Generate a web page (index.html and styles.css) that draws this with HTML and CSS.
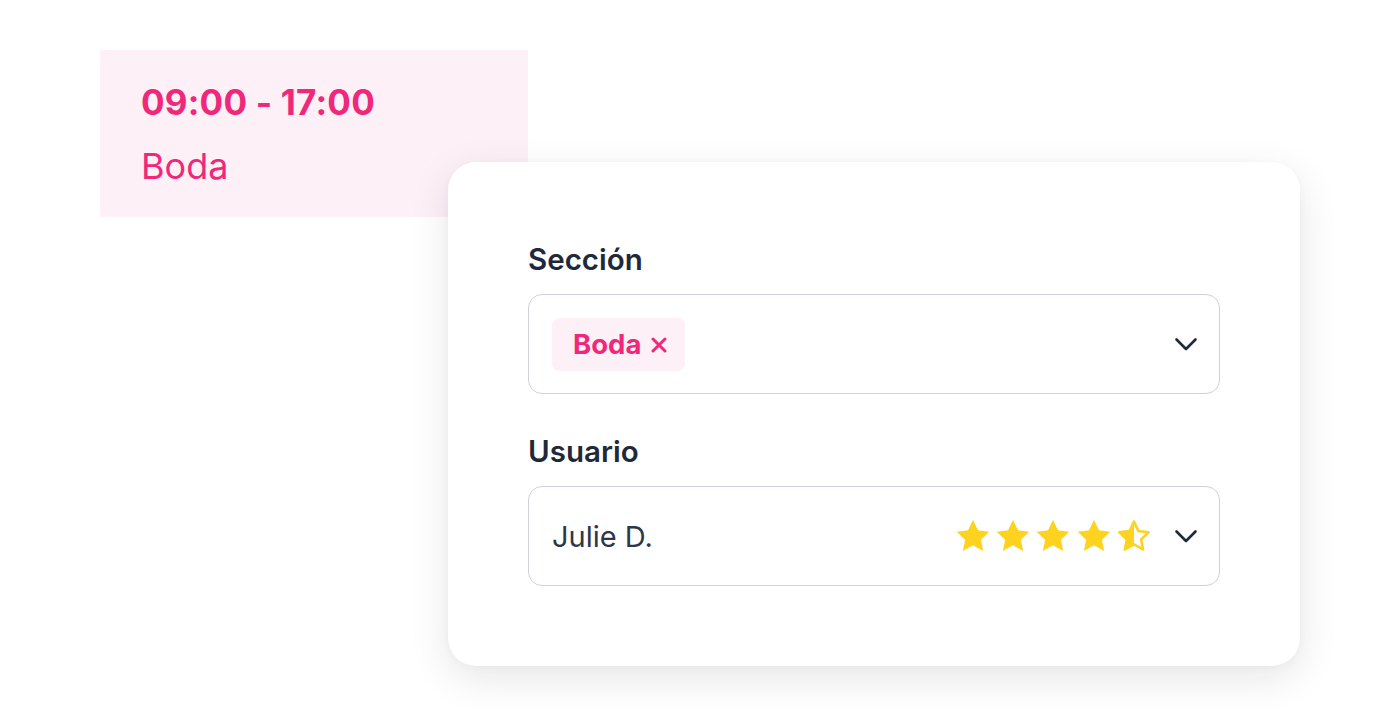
FILE: index.html
```html
<!DOCTYPE html>
<html lang="es">
<head>
<meta charset="utf-8">
<link rel="stylesheet" href="styles.css">
</head>
<body>
<div class="stage">
  <div class="event">
    <div class="event-time">09:00 - 17:00</div>
    <div class="event-name">Boda</div>
  </div>
  <div class="panel">
    <div class="field">
      <div class="label">Sección</div>
      <div class="select">
        <span class="tag"><span class="tag-text">Boda</span><svg class="tag-x" viewBox="0 0 16 16" width="16" height="16"><path d="M2 2l12 12M14 2L2 14" fill="none" stroke="#f0287a" stroke-width="3" stroke-linecap="round"/></svg></span>
        <span class="spacer"></span>
        <svg class="chev" viewBox="0 0 24 24" width="24" height="24"><path d="M2.5 7.5l9.5 9.5 9.5-9.5" fill="none" stroke="#1e293b" stroke-width="2.6" stroke-linecap="round" stroke-linejoin="round"/></svg>
      </div>
    </div>
    <div class="field">
      <div class="label">Usuario</div>
      <div class="select">
        <span class="value">Julie D.</span>
        <span class="spacer"></span>
        <span class="stars">
          <svg viewBox="0 0 24 24" width="38" height="38"><path class="star" d="M12 1.8l3.1 6.6 7.2.9-5.3 5 1.4 7.1L12 17.9l-6.4 3.5 1.4-7.1-5.3-5 7.2-.9z"/></svg>
          <svg viewBox="0 0 24 24" width="38" height="38"><path class="star" d="M12 1.8l3.1 6.6 7.2.9-5.3 5 1.4 7.1L12 17.9l-6.4 3.5 1.4-7.1-5.3-5 7.2-.9z"/></svg>
          <svg viewBox="0 0 24 24" width="38" height="38"><path class="star" d="M12 1.8l3.1 6.6 7.2.9-5.3 5 1.4 7.1L12 17.9l-6.4 3.5 1.4-7.1-5.3-5 7.2-.9z"/></svg>
          <svg viewBox="0 0 24 24" width="38" height="38"><path class="star" d="M12 1.8l3.1 6.6 7.2.9-5.3 5 1.4 7.1L12 17.9l-6.4 3.5 1.4-7.1-5.3-5 7.2-.9z"/></svg>
          <svg viewBox="0 0 24 24" width="38" height="38"><path class="star-outline" d="M12 2.9l2.8 6 6.4.8-4.7 4.5 1.3 6.3L12 17.3l-5.8 3.2 1.3-6.3-4.7-4.5 6.4-.8z"/><path class="star" d="M12 1.8v16.1l-6.4 3.5 1.4-7.1-5.3-5 7.2-.9z"/></svg>
        </span>
        <svg class="chev" viewBox="0 0 24 24" width="24" height="24"><path d="M2.5 7.5l9.5 9.5 9.5-9.5" fill="none" stroke="#1e293b" stroke-width="2.6" stroke-linecap="round" stroke-linejoin="round"/></svg>
      </div>
    </div>
  </div>
</div>
</body>
</html>
```

FILE: styles.css
```css
* { box-sizing: border-box; }
html, body { margin: 0; padding: 0; background: #ffffff; }
body { font-family: Inter, "Noto Sans", sans-serif; width: 1400px; height: 716px; overflow: hidden; }
.stage { position: relative; width: 1400px; height: 716px; }
.event {
  position: absolute; left: 100px; top: 50px; width: 428px; height: 167px;
  background: #fef0f7; padding: 30px 0 0 41px; color: #f0287a;
}
.event-time { font-size: 35px; font-weight: 700; line-height: 44px; letter-spacing: 0.2px; }
.event-name { font-size: 36px; font-weight: 400; line-height: 44px; margin-top: 20px; }
.panel {
  position: absolute; left: 448px; top: 162px; width: 852px; height: 504px;
  background: #fff; border-radius: 28px;
  box-shadow: 0 12px 40px rgba(15, 23, 42, 0.10), 0 2px 8px rgba(15, 23, 42, 0.03);
  padding: 77px 80px 0 80px;
  display: flex; flex-direction: column; gap: 37px;
}
.field { display: flex; flex-direction: column; gap: 15px; }
.label { font-size: 29.5px; font-weight: 600; color: #1e293b; line-height: 40px; }
.select {
  height: 100px; border: 1.5px solid #cfd2d6; border-radius: 14px;
  display: flex; align-items: center; padding: 0 21px 0 23px;
}
.spacer { flex: 1; }
.tag {
  background: #fef0f7; color: #f0287a; font-weight: 700; font-size: 27.5px;
  border-radius: 8px; padding: 0 18px 0 21px; height: 53px; display: flex; align-items: center; gap: 10px;
}
.tag-x { display: block; margin-top: 1px; }
.value { font-size: 29px; color: #2d3748; font-weight: 400; }
.stars { display: flex; gap: 2.3px; margin-right: 21px; }
.star { fill: #fdd31f; }
.star-outline { fill: none; stroke: #fdd31f; stroke-width: 1.6; stroke-linejoin: round; }
.chev { display: block; }
```
